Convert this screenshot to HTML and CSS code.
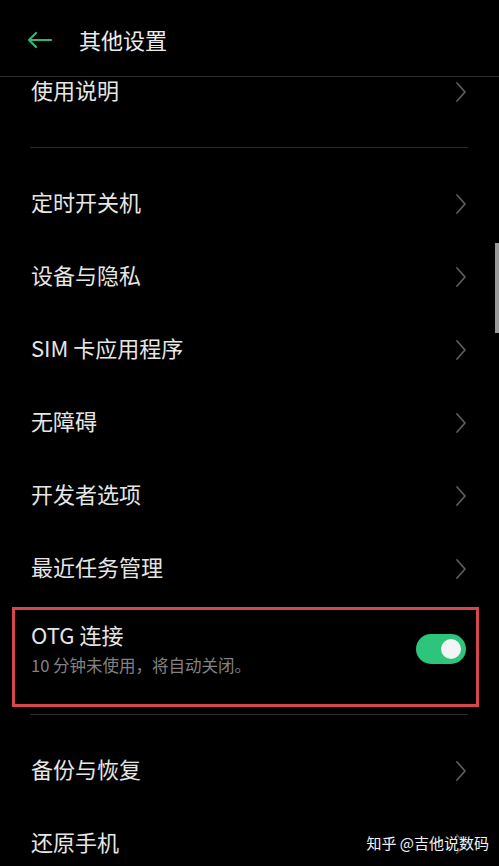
FILE: index.html
```html
<!DOCTYPE html>
<html lang="zh-CN">

<head>
    <meta charset="UTF-8">
    <meta name="viewport" content="width=device-width, initial-scale=1.0">
    <title>其他设置</title>
    <link rel="stylesheet" href="styles.css">
</head>

<body>
    <div class="screen">
        <header class="top-bar">
            <svg class="back-icon" width="26" height="18" viewBox="0 0 26 18">
                <path d="M2 9 H24 M9 2 L2 9 L9 16" fill="none" stroke="#2bb879" stroke-width="2.2" stroke-linecap="round" stroke-linejoin="round"/>
            </svg>
            <span class="title">其他设置</span>
        </header>

        <div class="list">
            <div class="group first">
                <div class="row partial">
                    <span class="label">使用说明</span>
                    <svg class="chevron" width="12" height="22" viewBox="0 0 12 22"><polyline points="2,2 10,11 2,20" /></svg>
                </div>
            </div>
            <div class="divider"></div>

            <div class="group">
                <div class="row">
                    <span class="label">定时开关机</span>
                    <svg class="chevron" width="12" height="22" viewBox="0 0 12 22"><polyline points="2,2 10,11 2,20" /></svg>
                </div>
                <div class="row">
                    <span class="label">设备与隐私</span>
                    <svg class="chevron" width="12" height="22" viewBox="0 0 12 22"><polyline points="2,2 10,11 2,20" /></svg>
                </div>
                <div class="row">
                    <span class="label">SIM 卡应用程序</span>
                    <svg class="chevron" width="12" height="22" viewBox="0 0 12 22"><polyline points="2,2 10,11 2,20" /></svg>
                </div>
                <div class="row">
                    <span class="label">无障碍</span>
                    <svg class="chevron" width="12" height="22" viewBox="0 0 12 22"><polyline points="2,2 10,11 2,20" /></svg>
                </div>
                <div class="row">
                    <span class="label">开发者选项</span>
                    <svg class="chevron" width="12" height="22" viewBox="0 0 12 22"><polyline points="2,2 10,11 2,20" /></svg>
                </div>
                <div class="row">
                    <span class="label">最近任务管理</span>
                    <svg class="chevron" width="12" height="22" viewBox="0 0 12 22"><polyline points="2,2 10,11 2,20" /></svg>
                </div>

                <div class="otg-box">
                    <div class="otg-text">
                        <span class="otg-title">OTG 连接</span>
                        <span class="sub">10 分钟未使用，将自动关闭。</span>
                    </div>
                    <div class="switch on"><span class="knob"></span></div>
                </div>
            </div>
            <div class="divider"></div>

            <div class="group">
                <div class="row">
                    <span class="label">备份与恢复</span>
                    <svg class="chevron" width="12" height="22" viewBox="0 0 12 22"><polyline points="2,2 10,11 2,20" /></svg>
                </div>
                <div class="row">
                    <span class="label">还原手机</span>
                    <svg class="chevron" width="12" height="22" viewBox="0 0 12 22"><polyline points="2,2 10,11 2,20" /></svg>
                </div>
            </div>
        </div>

        <!-- scroll thumb + watermark sit over the list -->
        <div class="scroll-thumb"></div>
        <div class="watermark">知乎 @吉他说数码</div>
    </div>
</body>

</html>
```

FILE: styles.css
```css
* {
    box-sizing: border-box;
}

body {
    margin: 0;
    padding: 0;
    background: #000;
    font-family: "Noto Sans CJK SC", "Noto Sans", sans-serif;
    color: #e6e6e6;
}

.screen {
    position: relative;
    width: 499px;
    height: 866px;
    overflow: hidden;
    background: #000;
}

.top-bar {
    display: flex;
    align-items: center;
    height: 77px;
    padding: 2px 0 0 27px;
    border-bottom: 1px solid #2c2c2c;
}

.back-icon {
    display: block;
    margin-top: 2px;
}

.title {
    margin-left: 26px;
    font-size: 22px;
    line-height: 30px;
    color: #ececec;
}

.list {
    display: flex;
    flex-direction: column;
}

.group {
    display: flex;
    flex-direction: column;
}

.group.first {
    padding-bottom: 19px;
}

.row {
    display: flex;
    align-items: center;
    justify-content: space-between;
    height: 73px;
    padding: 0 32px 0 31px;
}

/* first item is scrolled half under the top bar */
.row.partial {
    height: 51px;
    align-items: flex-start;
}

.label {
    font-size: 22px;
    line-height: 30px;
    padding-bottom: 6px;
    color: #e6e6e6;
}

.row.partial .label {
    margin-top: -3px;
}

.chevron {
    display: block;
}

.row.partial .chevron {
    margin-top: 4px;
}

.chevron polyline {
    fill: none;
    stroke: #5c5c5c;
    stroke-width: 1.8;
    stroke-linecap: round;
    stroke-linejoin: round;
}

.divider {
    height: 1px;
    margin: 0 31px 19px 30px;
    background: #2a2a2a;
}

.otg-box {
    display: flex;
    align-items: flex-start;
    justify-content: space-between;
    height: 100px;
    margin: 2px 20px 7px 12px;
    padding: 9px 10px 0 16px;
    border: 3px solid #d6474b;
}

.otg-text {
    display: flex;
    flex-direction: column;
}

.otg-title {
    font-size: 22px;
    line-height: 30px;
    color: #e6e6e6;
}

.sub {
    margin-top: 5px;
    font-size: 16.5px;
    line-height: 22px;
    color: #828282;
}

.switch {
    position: relative;
    width: 50px;
    height: 30px;
    margin-top: 15px;
    border-radius: 15px;
    background: #444;
}

.switch.on {
    background: #2cc57b;
}

.knob {
    position: absolute;
    top: 5px;
    right: 5px;
    width: 20px;
    height: 20px;
    border-radius: 50%;
    background: #f4f4f4;
}

.scroll-thumb {
    position: absolute;
    top: 243px;
    right: 0;
    width: 4px;
    height: 90px;
    background: #9a9a9a;
}

.watermark {
    position: absolute;
    right: 10px;
    bottom: 12px;
    font-size: 15px;
    line-height: 22px;
    color: #f2f2f2;
    text-shadow: 0 0 2px #000;
}
```
